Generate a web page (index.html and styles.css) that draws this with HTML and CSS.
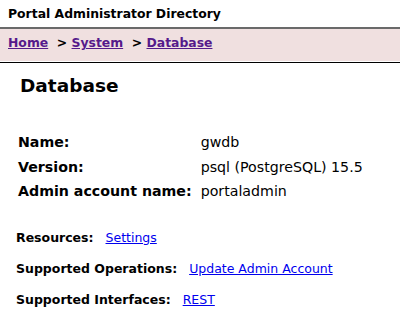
FILE: index.html
```html
<!DOCTYPE html>
<html lang="en">
  <head>
    <meta charset="UTF-8">
    <title>Portal Administrator Directory</title>
    <link rel="stylesheet" href="styles.css">
  </head>
  <body>
    <div class="header">Portal Administrator Directory</div>
    <div class="navbar">
      <a href="#">Home</a>&nbsp; &gt; <a href="#">System</a>&nbsp; &gt; <a href="#">Database</a>
    </div>
    <div class="content">
      <h2>Database</h2>
      <table class="props">
        <tr><td class="label">Name:</td><td>gwdb</td></tr>
        <tr><td class="label">Version:</td><td>psql (PostgreSQL) 15.5</td></tr>
        <tr><td class="label">Admin account name:</td><td>portaladmin</td></tr>
      </table>
      <p class="section"><b>Resources:</b> <a class="link" href="#">Settings</a></p>
      <p class="section"><b>Supported Operations:</b> <a class="link" href="#">Update Admin Account</a></p>
      <p class="section"><b>Supported Interfaces:</b> <a class="link" href="#">REST</a></p>
    </div>
  </body>
</html>
```

FILE: styles.css
```css
/* Estilos gerais */
body {
    margin: 0;
    font-family: 'DejaVu Sans', Verdana, sans-serif;
    font-size: 12px;
    color: #000;
    background: #fff;
}

.header {
    font-weight: bold;
    font-size: 12.4px;
    padding: 6px 8px 6px 8px;
    border-bottom: 2px solid #6a6a6a;
}

.navbar {
    background-color: #f0e0e0;
    font-weight: bold;
    font-size: 12.4px;
    padding: 6px 8px 12px 8px;
    border-bottom: 1px solid #000;
    box-shadow: inset 0 -1px 0 #fff;
}

.navbar a {
    color: #551a8b;
}

.content {
    padding: 0 16px;
}

h2 {
    font-size: 18.5px;
    margin: 12px 0 34px 4px;
}

.props {
    font-size: 14.2px;
    border-spacing: 0;
    margin-bottom: 26px;
}

.props td {
    padding: 3px 12px 3px 2px;
    height: 18.5px;
    white-space: nowrap;
}

.props td.label {
    font-weight: bold;
    width: 165px;
    padding-right: 7px;
}

.section {
    font-size: 12.5px;
    margin: 16px 0 0 0;
    height: 15px;
}

.props + .section {
    margin-top: 0;
}

.section b {
    margin-right: 8px;
}

.link {
    color: #0000ee;
}
```
